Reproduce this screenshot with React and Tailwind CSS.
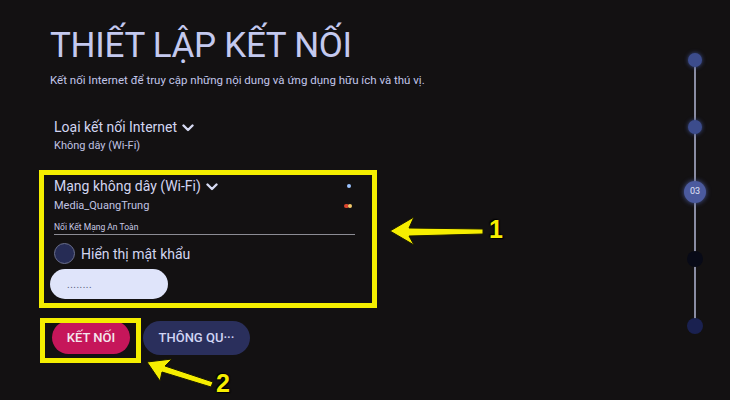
import React from 'react';

const Chevron = () => (
  <svg width="12" height="8" viewBox="0 0 12 8" className="ml-[5px] mt-[2px]">
    <path d="M1.5 1.5 L6 6 L10.5 1.5" fill="none" stroke="#d6d9f2" strokeWidth="2.4" strokeLinecap="round" strokeLinejoin="round" />
  </svg>
);

const App = () => {
  return (
    <div
      className="relative w-[730px] h-[400px] overflow-hidden bg-[#131112] flex"
      style={{ fontFamily: 'Roboto, "Noto Sans", sans-serif' }}
    >
      {/* Main column */}
      <div className="flex-1 pl-[50px] pt-[24px]">
        <h1 className="text-[35px] leading-[44px] font-normal tracking-[-0.3px] text-[#c4c9ef]">
          THIẾT LẬP KẾT NỐI
        </h1>
        <p className="mt-[4px] text-[11.5px] leading-[16px] text-[#c2c6ea]">
          Kết nối Internet để truy cập những nội dung và ứng dụng hữu ích và thú vị.
        </p>

        <div className="pl-[4px] mt-[30px]">
          <div className="flex items-center text-[14px] leading-[18px] text-[#d2d5f1]">
            Loại kết nối Internet <Chevron />
          </div>
          <div className="mt-[2px] text-[11px] leading-[16px] text-[#c0c3e2]">Không dây (Wi-Fi)</div>
        </div>

        {/* Wi-Fi section */}
        <div className="w-[305px] pl-[4px] mt-[23px]">
          <div className="flex items-center justify-between">
            <div className="flex items-center text-[14px] leading-[18px] text-[#d2d5f1]">
              Mạng không dây (Wi-Fi) <Chevron />
            </div>
            <span className="w-[4px] h-[4px] rounded-full bg-[#9cc3ff] mr-[4px]" />
          </div>
          <div className="flex items-center justify-between mt-[3px]">
            <div className="text-[11px] leading-[16px] text-[#c0c3e2]">Media_QuangTrung</div>
            <div className="flex mr-[3px]">
              <span className="w-[5px] h-[4px] rounded-full bg-[#d8452f]" />
              <span className="w-[4px] h-[4px] rounded-full bg-[#f2c86a] -ml-[1px]" />
            </div>
          </div>
          <div className="mt-[7px] pb-[1px] border-b border-[#8c8c94] text-[8.5px] leading-[12px] text-[#c8cae4] w-[301px]">
            Nối Kết Mạng An Toàn
          </div>
          <div className="flex items-center mt-[8px]">
            <span className="w-[21px] h-[21px] rounded-full bg-[#262c55] border border-[#6a6f8c]" />
            <span className="ml-[6px] text-[14px] leading-[18px] text-[#d2d5f1]">Hiển thị mật khẩu</span>
          </div>
        </div>
        <div className="mt-[5px] w-[118px] h-[30px] rounded-full bg-[#dfe4fa] flex items-center pl-[17px] text-[10px] text-[#555a78] tracking-[0.5px]">
          ........
        </div>

        {/* Buttons */}
        <div className="flex mt-[22px] pl-[2px] gap-[13px]">
          <div className="w-[78px] h-[33px] rounded-full bg-[#c6165a] flex items-center justify-center text-[13px] font-medium text-[#f4e6ee]">
            KẾT NỐI
          </div>
          <div className="w-[107px] h-[34px] rounded-full bg-[#2a2f5c] flex items-center justify-center text-[13px] font-medium text-[#d0d4f4]">
            THÔNG QU···
          </div>
        </div>
      </div>

      {/* Progress rail */}
      <div className="relative w-[24px] mr-[23px] flex flex-col items-center pt-[53px]">
        <div className="absolute left-[11px] top-[60px] h-[266px] w-[2px] bg-[#8a8da3]" />
        <span className="relative w-[14px] h-[14px] rounded-full bg-[#3c4c8c] shadow-[0_0_4px_#3c4c8c]" />
        <span className="relative mt-[53px] w-[14px] h-[14px] rounded-full bg-[#3c4c8c] shadow-[0_0_4px_#3c4c8c]" />
        <span className="relative mt-[47px] w-[22px] h-[22px] rounded-full bg-[#4b5a9e] shadow-[0_0_5px_#4b5a9e] flex items-center justify-center text-[9px] text-[#e2e5f7]">
          03
        </span>
        <span className="relative mt-[48px] w-[16px] h-[16px] rounded-full bg-[#080a17]" />
        <span className="relative mt-[51px] w-[16px] h-[16px] rounded-full bg-[#1a2150]" />
      </div>

      {/* Annotation boxes */}
      <div className="absolute left-[39px] top-[170px] w-[338px] h-[138px] border-[5px] border-[#f4ee00]" />
      <div className="absolute left-[40px] top-[318px] w-[101px] h-[45px] border-[5px] border-[#f4ee00]" />

      {/* Annotation arrows */}
      <svg className="absolute left-0 top-0 pointer-events-none" width="730" height="400">
        <polygon
          points="390,231 414,217 409,228 483,229 483,234 409,236 414,245"
          fill="#f6ee00"
          stroke="#1a1a00"
          strokeWidth="1"
          strokeLinejoin="round"
        />
        <polygon
          points="147,362 172,359 165,366 213,382 211,387 162,372 160,381"
          fill="#f6ee00"
          stroke="#1a1a00"
          strokeWidth="1"
          strokeLinejoin="round"
        />
      </svg>
      <span
        className="absolute left-[489px] top-[214px] text-[25px] font-bold leading-[30px] text-[#f6ee00]"
        style={{ fontFamily: '"Liberation Sans", Arial, sans-serif', textShadow: '0 0 2px #000, 1px 1px 1px #000, -1px -1px 1px #000' }}
      >
        1
      </span>
      <span
        className="absolute left-[216px] top-[368px] text-[25px] font-bold leading-[30px] text-[#f6ee00]"
        style={{ fontFamily: '"Liberation Sans", Arial, sans-serif', textShadow: '0 0 2px #000, 1px 1px 1px #000, -1px -1px 1px #000' }}
      >
        2
      </span>
    </div>
  );
};

export default App;
